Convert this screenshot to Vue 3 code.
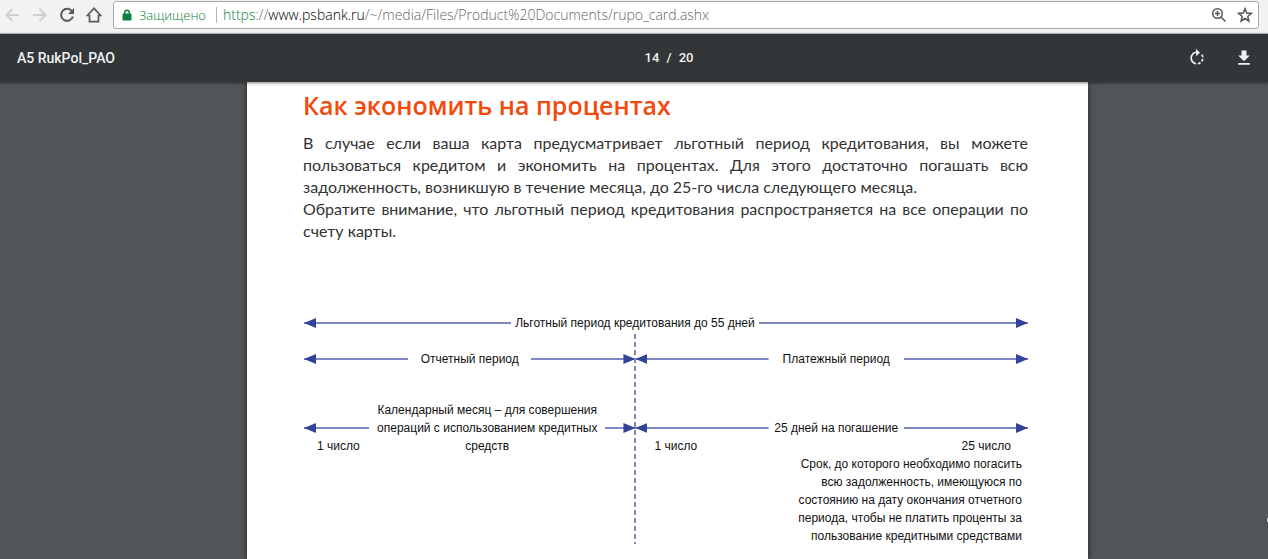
<script setup>
const lines = [
  'Срок, до которого необходимо погасить',
  'всю задолженность, имеющуюся по',
  'состоянию на дату окончания отчетного',
  'периода, чтобы не платить проценты за',
  'пользование кредитными средствами',
]
</script>

<template>
  <div class="window">
    <header class="browser">
      <button class="nav" aria-label="Назад" disabled>
        <svg viewBox="0 0 16 16"><path d="M14 8H1.500M7.500 2l-6 6 6 6" /></svg>
      </button>
      <button class="nav" aria-label="Вперёд" disabled>
        <svg viewBox="0 0 16 16"><path d="M1 8h12.500M7.500 2l6 6-6 6" /></svg>
      </button>
      <button class="nav on" aria-label="Обновить">
        <svg viewBox="0 0 16 16"><path d="M13 4.300A6 6 0 1 0 13.900 9.500" /><path class="solid" d="M15 1v6H9z" /></svg>
      </button>
      <button class="nav on home" aria-label="Домой">
        <svg viewBox="0 0 16 16"><path d="M8 1.300L1.300 8.500H3.500V14.700H12.500V8.500H14.700z" /></svg>
      </button>
      <div class="omnibox">
        <svg class="lock" viewBox="0 0 10 12"><path d="M1 5h8v6H1z" class="body" /><path d="M2.700 5.500V3.500a2.300 2.300 0 0 1 4.600 0v2" class="shackle" /></svg>
        <span class="secure">Защищено</span>
        <div class="url" role="textbox" aria-label="Адрес" tabindex="0"><span class="scheme">https</span>://<span class="host">www.psbank.ru</span>/~/media/Files/Product%20Documents/rupo_card.ashx</div>
        <button class="tool" aria-label="Масштаб">
          <svg viewBox="0 0 16 16"><circle cx="6.500" cy="6.500" r="4.800" /><path d="M10 10l4.500 4.500M4 6.500h5M6.500 4v5" /></svg>
        </button>
        <button class="tool" aria-label="В закладки">
          <svg viewBox="0 0 16 16"><path d="M8 1.800l1.700 4.300 4.600.3-3.500 3 1.100 4.600L8 11.500 4.100 14l1.100-4.600-3.500-3 4.600-.3z" /></svg>
        </button>
      </div>
    </header>

    <div class="toolbar">
      <h1 class="title">A5 RukPol_PAO</h1>
      <div class="pages">
        <input class="num" value="14" aria-label="Номер страницы" /><span>/</span><span>20</span>
      </div>
      <div class="actions">
        <button aria-label="Повернуть">
          <svg viewBox="0 0 24 24"><path d="M15.550 5.550L11 1v3.070C7.060 4.560 4 7.920 4 12s3.050 7.440 7 7.930v-2.020c-2.840-.480-5-2.940-5-5.910s2.160-5.430 5-5.910V10l4.550-4.450zM19.930 11c-.170-1.390-.720-2.730-1.620-3.890l-1.420 1.420c.540.750.880 1.600 1.020 2.470h2.020zM13 17.900v2.020c1.390-.170 2.740-.710 3.900-1.610l-1.440-1.440c-.750.540-1.590.890-2.460 1.030zm3.890-2.420l1.420 1.410c.900-1.160 1.450-2.500 1.620-3.890h-2.020c-.140.870-.480 1.720-1.020 2.480z" /></svg>
        </button>
        <button aria-label="Скачать">
          <svg viewBox="0 0 24 24"><path d="M19 9h-4V3H9v6H5l7 7 7-7zM5 18v2h14v-2H5z" /></svg>
        </button>
      </div>
    </div>

    <main class="viewer">
      <article class="page">
        <h2>Как экономить на процентах</h2>
        <p class="text">В случае если ваша карта предусматривает льготный период кредитования, вы можете пользоваться кредитом и экономить на процентах. Для этого достаточно погашать всю задолженность, возникшую в течение месяца, до 25-го числа следующего месяца.</p>
        <p class="text">Обратите внимание, что льготный период кредитования распространяется на все операции по счету карты.</p>

        <section class="diagram">
          <div class="row total">
            <i class="arrow left"></i><span class="label">Льготный период кредитования до 55 дней</span><i class="arrow right"></i>
          </div>
          <div class="halves">
            <div class="row report">
              <i class="arrow left"></i><span class="label">Отчетный период</span><i class="arrow right"></i>
            </div>
            <div class="row pay">
              <i class="arrow left"></i><span class="label">Платежный период</span><i class="arrow right"></i>
            </div>
          </div>
          <div class="halves detail">
            <div class="row month">
              <i class="arrow left"></i><span class="label">Календарный месяц – для совершения<br />операций с использованием кредитных<br />средств</span><i class="arrow right"></i>
              <span class="day first">1 число</span>
            </div>
            <div class="row pay">
              <i class="arrow left"></i><span class="label">25 дней на погашение</span><i class="arrow right"></i>
              <span class="day first">1 число</span><span class="day last">25 число</span>
            </div>
          </div>
          <p class="note"><template v-for="(l, i) in lines" :key="i">{{ l }}<br /></template></p>
          <svg class="divider" aria-hidden="true"><line x1="1" y1="0" x2="1" y2="100%" /></svg>
        </section>
      </article>
      <button class="zoom" aria-label="По размеру страницы"></button>
    </main>
  </div>
</template>

<style>
body { margin: 0; background: #525659; }
</style>

<style scoped>
.window { min-height: 100vh; display: flex; flex-direction: column; overflow: hidden; }
button { border: 0; padding: 0; background: none; display: flex; }
.browser { height: 34px; box-sizing: border-box; padding: 0 4px 3px 5px; display: flex; align-items: center; gap: 11px; background: #f2f2f2; border-bottom: 1px solid #b6bcbc; flex: none; }
.nav svg, .tool svg { width: 16px; height: 16px; fill: none; stroke: #cfcfcf; stroke-width: 2; }
.nav.on svg { stroke: #5a5a5a; }
.nav.home svg { stroke-width: 1.700; }
.nav .solid { fill: #5a5a5a; stroke: none; }
.omnibox { flex: 1; height: 28px; box-sizing: border-box; margin-right: 5px; padding: 0 5px 0 8px; display: flex; align-items: center; background: #fff; border: 1px solid #a9a9a9; border-radius: 3px; font: 300 14px/20px "Open Sans", "Noto Sans", sans-serif; color: #666; }
.lock { width: 10px; height: 12px; margin-right: 7px; }
.lock .body { fill: #0b8043; stroke: #0b8043; }
.lock .shackle { fill: none; stroke: #0b8043; stroke-width: 1.500; }
.secure { color: #0b8043; padding-right: 10px; border-right: 1px solid #b5b5b5; font-size: 13px; line-height: 16px; }
.url { flex: 1; margin-left: 6px; white-space: nowrap; }
.scheme { color: #0b8043; }
.host { color: #000; }
.tool { margin-left: 10px; }
.tool svg { stroke: #555; stroke-width: 1.500; }
.toolbar { height: 48px; flex: none; display: flex; align-items: center; position: relative; z-index: 1; box-sizing: border-box; padding: 0 14px 0 17px; background: #323639; color: #f1f1f1; font: 500 14px/20px Roboto, sans-serif; box-shadow: 0 1px 3px rgba(0, 0, 0, 0.5); }
.title { flex: 1; margin: 0; font: inherit; }
.pages { display: flex; gap: 7px; margin-left: 67px; font-size: 13px; }
.num { width: 15px; padding: 0; border: 0; background: none; color: inherit; font: inherit; }
.actions { flex: 1; display: flex; justify-content: flex-end; gap: 27px; }
.actions svg { width: 20px; height: 20px; fill: #f1f1f1; }
.viewer { flex: 1; display: grid; grid-template-columns: 247fr 841fr 180fr; position: relative; }
.page { grid-column: 2; box-sizing: border-box; padding: 8px 60px 0 56px; background: #fff; box-shadow: 0 0 6px rgba(0, 0, 0, 0.6); color: #333; }
h2 { margin: 0 0 12px; font: 600 25px/30px "Open Sans", "Noto Sans", sans-serif; color: #f24a0c; white-space: nowrap; }
.text { margin: 0; font: 400 16px/22px Lato, "Open Sans", sans-serif; text-align: justify; }
.diagram { position: relative; margin-top: 72px; padding-left: 1px; font: 12px/18px "Liberation Sans", sans-serif; color: #111; }
.row { display: grid; align-items: center; }
.label { text-align: center; white-space: nowrap; justify-self: center; }
.total { grid-template-columns: 207fr 247fr 269fr; margin-bottom: 18px; }
.halves { display: grid; grid-template-columns: 331fr 392fr; }
.report { grid-template-columns: 104fr 123fr 104fr; }
.pay { grid-template-columns: 133fr 135fr 124fr; }
.month { grid-template-columns: 65fr 236fr 30fr; }
.total > *, .report > *, .pay > *, .month > * { min-width: 0; }
.arrow { height: 10px; background: linear-gradient(#7f88c2, #7f88c2) center / 100% 2px no-repeat; display: flex; }
.arrow::before { content: ""; width: 12px; height: 10px; background: #34439a; }
.arrow.left::before { clip-path: polygon(0 50%, 100% 0, 100% 100%); }
.arrow.right { justify-content: flex-end; }
.arrow.right::before { clip-path: polygon(100% 50%, 0 0, 0 100%); }
.detail { margin-top: 33px; }
.detail .row { grid-template-rows: 18px 18px 18px; }
.detail .arrow { grid-row: 2; }
.detail .arrow.left { grid-column: 1; }
.detail .arrow.right { grid-column: 3; }
.detail .label { grid-row: 1 / 4; grid-column: 2; }
.day { grid-row: 3; white-space: nowrap; }
.first { grid-column: 1; padding-left: 13px; }
.pay .first { padding-left: 19px; }
.last { grid-column: 3; justify-self: end; padding-right: 17px; }
.note { margin: 0; padding-right: 6px; text-align: right; }
.divider { position: absolute; left: calc(45.800% - 1px); top: 20px; width: 2px; height: 210px; }
.divider line { stroke: #7b86bd; stroke-width: 2; stroke-dasharray: 5 3; }
.zoom { position: absolute; right: -9px; bottom: 34px; width: 10px; height: 10px; border-radius: 5px; background: #f1f1f1; box-shadow: 0 1px 3px rgba(0, 0, 0, 0.4); }
</style>
